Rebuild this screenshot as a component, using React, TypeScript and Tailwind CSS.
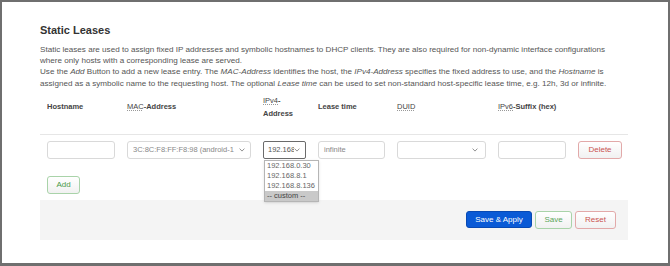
import React from 'react';

const Chevron = () => (
  <svg width="6" height="4" viewBox="0 0 6 4" className="shrink-0">
    <path d="M0.6 0.6 L3 3.1 L5.4 0.6" fill="none" stroke="#777" strokeWidth="0.8" />
  </svg>
);

const inputCls =
  'h-[18px] rounded-[3px] border border-[#d9d9d9] bg-white text-[7.5px] text-[#888] flex items-center px-[5px]';

const lightBtn =
  'h-[18px] rounded-[3px] border text-[8px] flex items-center justify-center bg-gradient-to-b from-white to-[#f1f1f1]';

export default function App() {
  return (
    <div className="w-[670px] h-[266px] border-2 border-b-[3px] border-[#6f6f6f] bg-white font-['Liberation_Sans',Arial,sans-serif]">
      <div className="pl-[38px] pr-[40px] pt-[22px]">
        <h3 className="text-[11px] font-bold leading-[13px] text-[#333]">Static Leases</h3>
        <p className="mt-[7px] text-[8.1px] leading-[11.2px] text-[#555] whitespace-nowrap">
          Static leases are used to assign fixed IP addresses and symbolic hostnames to DHCP clients. They are also required for non-dynamic interface configurations
          <br />
          where only hosts with a corresponding lease are served.
          <br />
          Use the <em>Add</em> Button to add a new lease entry. The <em>MAC-Address</em> identifies the host, the <em>IPv4-Address</em> specifies the fixed address to use, and the <em>Hostname</em> is
          <br />
          assigned as a symbolic name to the requesting host. The optional <em>Lease time</em> can be used to set non-standard host-specific lease time, e.g. 12h, 3d or infinite.
        </p>

        <div className="mt-[5px] w-[588px]">
          {/* header */}
          <div className="grid grid-cols-[80px_136px_55px_79px_101px_80px_50px] pl-[7px] items-center pb-[14px] border-b border-[#e6e6e6] text-[7.5px] leading-[13px] text-[#444] font-bold">
            <div>Hostname</div>
            <div>
              <span className="font-normal underline decoration-dotted decoration-[#999]">MAC</span>-Address
            </div>
            <div>
              <span className="font-normal underline decoration-dotted decoration-[#999]">IPv4</span>-
              <br />
              Address
            </div>
            <div>Lease time</div>
            <div>
              <span className="font-normal underline decoration-dotted decoration-[#999]">DUID</span>
            </div>
            <div>
              <span className="font-normal underline decoration-dotted decoration-[#999]">IPv6</span>-Suffix (hex)
            </div>
            <div />
          </div>

          {/* row */}
          <div className="grid grid-cols-[80px_136px_55px_79px_101px_80px_50px] pl-[7px] items-center pt-[6px]">
            <div className={`${inputCls} w-[68px]`} />
            <div className={`${inputCls} w-[124px] justify-between text-[#666]`}>
              <span className="overflow-hidden whitespace-nowrap w-[106px]">3C:8C:F8:FF:F8:98 (android-1</span>
              <Chevron />
            </div>
            <div className="relative w-[43px]">
              <div className="h-[18px] rounded-[2px] border border-[#6b6b6b] bg-white text-[7.5px] text-[#555] flex items-center justify-between pl-[4px] pr-[5px]">
                <span className="overflow-hidden whitespace-nowrap w-[26px]">192.168.0.30</span>
                <Chevron />
              </div>
              <div className="absolute left-[1px] top-[19px] w-[55px] border border-[#b5b5b5] bg-white text-[7.5px] leading-[10px] text-[#666] shadow-sm">
                <div className="px-[2px] h-[10px]">192.168.0.30</div>
                <div className="px-[2px] h-[10px]">192.168.8.1</div>
                <div className="px-[2px] h-[10px]">192.168.8.136</div>
                <div className="px-[2px] h-[10px] bg-[#c9c9c9] text-[#444]">-- custom --</div>
              </div>
            </div>
            <div className={`${inputCls} w-[67px]`}>infinite</div>
            <div className={`${inputCls} w-[89px] justify-end pr-[7px]`}>
              <Chevron />
            </div>
            <div className={`${inputCls} w-[68px]`} />
            <div className={`${lightBtn} w-[44px] border-[#e2a9a9] text-[#c9534f]`}>Delete</div>
          </div>

          <div className="pl-[7px] mt-[17px]">
            <div className={`${lightBtn} w-[33px] border-[#a9d3a9] text-[#4a9a4a]`}>Add</div>
          </div>
        </div>

        {/* footer */}
        <div className="mt-[6px] w-[588px] h-[40px] bg-[#f4f4f4] flex items-center justify-end pr-[12px] gap-[3px]">
          <div className="h-[17px] w-[66px] rounded-[3px] bg-[#0a5ad6] border border-[#0849b3] text-white text-[8px] flex items-center justify-center">
            Save &amp; Apply
          </div>
          <div className={`${lightBtn} h-[17px] w-[37px] border-[#a9d3a9] text-[#5aa55a]`}>Save</div>
          <div className={`${lightBtn} h-[17px] w-[41px] border-[#e2a9a9] text-[#c9534f]`}>Reset</div>
        </div>
      </div>
    </div>
  );
}
